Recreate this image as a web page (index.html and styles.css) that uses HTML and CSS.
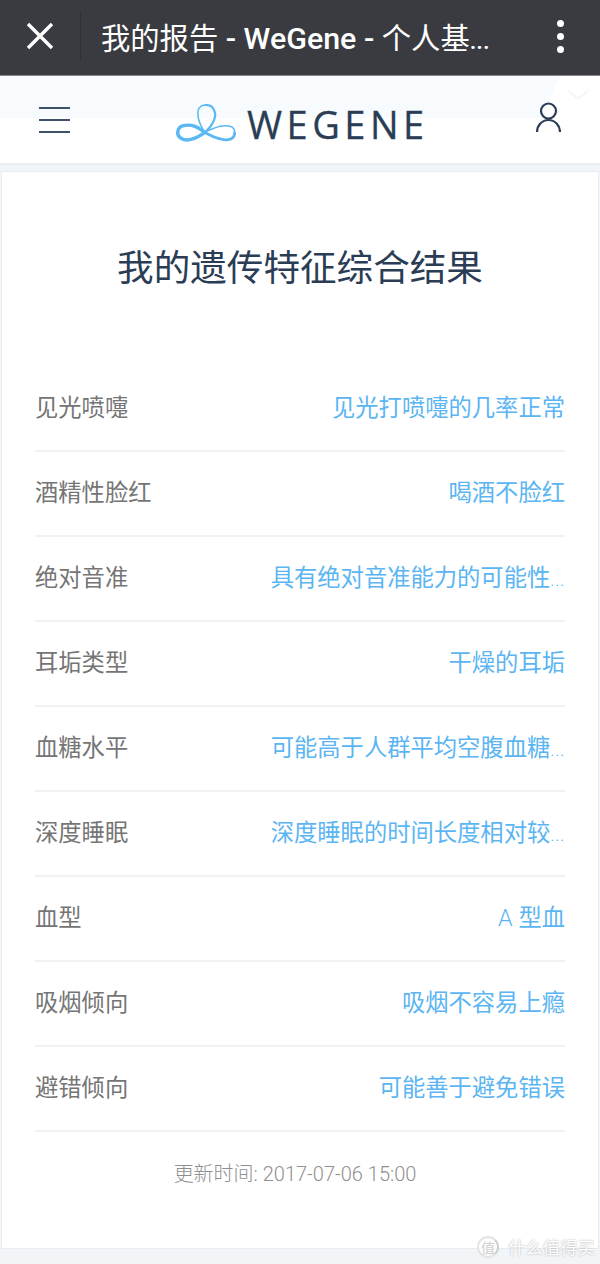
FILE: index.html
```html
<!DOCTYPE html>
<html lang="zh">
<head>
<meta charset="utf-8">
<title>我的报告 - WeGene</title>
<link rel="stylesheet" href="styles.css">
</head>
<body>
<header class="appbar">
  <button class="appbar-close" aria-label="关闭">
    <svg width="28" height="28" viewBox="0 0 28 28"><path d="M2 2 L26 26 M26 2 L2 26" stroke="#fff" stroke-width="3.4" fill="none"/></svg>
  </button>
  <div class="appbar-title">我的报告<span class="appbar-latin"> - WeGene - </span>个人基<span class="appbar-dots">...</span></div>
  <div class="appbar-more"><i></i><i></i><i></i></div>
</header>
<nav class="nav">
  <svg class="nav-chevron" width="22" height="10" viewBox="0 0 22 10"><path d="M1 1 L11 8.5 L21 1" fill="none" stroke="#f1f6fa" stroke-width="2"/></svg>
  <div class="burger"><i></i><i></i><i></i></div>
  <div class="brand">
    <svg class="brand-mark" width="60" height="40" viewBox="0 0 60 40">
      <path d="M29 28.3 C25 31 21 33.5 17.3 34.7 C13 36.2 8.5 36.3 5.7 34.7 C2.8 33 1.5 31 1.7 28.3 C2 25 4 22.5 7.3 21.7 C11 20.8 15.5 21 19 22.3 C23 23.8 26 26.5 29 28.3" fill="none" stroke="#5bb8f5" stroke-width="3.4" stroke-linecap="round"/>
      <path d="M29 28.3 C32 30 35.5 32 39 33.3 C43.5 35 48.5 36.4 52.3 35.7 C56.5 35 58.6 32.5 58.7 29" fill="none" stroke="#5bb8f5" stroke-width="2.8" stroke-linecap="round"/>
      <path d="M58.7 29 C58.8 25.5 57 23 54 22.3 C50.5 21.5 47 21.6 44 22.3 C40.5 23.2 37 24.6 31 27" fill="none" stroke="#5bb8f5" stroke-width="1.6" stroke-linecap="round"/>
      <path d="M28 27.3 C25.5 23 23 18 22.3 14 C21.6 10.5 21.5 8 22.3 5.7 C23.5 2.5 26.5 1 30 1" fill="none" stroke="#5bb8f5" stroke-width="1.5" stroke-linecap="round"/>
      <path d="M30 1 C34.5 1 38 4 39 9 C39.8 13 38 17 35.7 20.7 C34 23.5 32 25.5 30 27.3" fill="none" stroke="#5bb8f5" stroke-width="2.2" stroke-linecap="round"/>
    </svg>
    <span class="brand-name">WEGENE</span>
  </div>
  <svg class="user" width="26" height="32" viewBox="0 0 26 32"><circle cx="13.5" cy="9" r="7.5" fill="none" stroke="#2c3e55" stroke-width="2.2"/><path d="M2 30 A11.5 12 0 0 1 25 30" fill="none" stroke="#2c3e55" stroke-width="2.2"/></svg>
</nav>
<main class="card">
  <h1 class="card-title">我的遗传特征综合结果</h1>
  <ul class="list">
    <li class="row"><span class="row-label">见光喷嚏</span><span class="row-value">见光打喷嚏的几率正常</span></li>
    <li class="row"><span class="row-label">酒精性脸红</span><span class="row-value">喝酒不脸红</span></li>
    <li class="row"><span class="row-label">绝对音准</span><span class="row-value">具有绝对音准能力的可能性<span class="row-more">...</span></span></li>
    <li class="row"><span class="row-label">耳垢类型</span><span class="row-value">干燥的耳垢</span></li>
    <li class="row"><span class="row-label">血糖水平</span><span class="row-value">可能高于人群平均空腹血糖<span class="row-more">...</span></span></li>
    <li class="row"><span class="row-label">深度睡眠</span><span class="row-value">深度睡眠的时间长度相对较<span class="row-more">...</span></span></li>
    <li class="row"><span class="row-label">血型</span><span class="row-value"><span class="row-latin">A</span> 型血</span></li>
    <li class="row"><span class="row-label">吸烟倾向</span><span class="row-value">吸烟不容易上瘾</span></li>
    <li class="row"><span class="row-label">避错倾向</span><span class="row-value">可能善于避免错误</span></li>
  </ul>
  <p class="updated">更新时间: 2017-07-06 15:00</p>
</main>
<div class="watermark"><span class="watermark-mark">值</span><span>什么值得买</span></div>
</body>
</html>
```
FILE: styles.css
```css
* { box-sizing: border-box; }
html, body { margin: 0; padding: 0; }
body {
  width: 600px;
  height: 1264px;
  overflow: hidden;
  position: relative;
  background: #f2f5f8;
  font-family: Roboto, "Noto Sans CJK SC", sans-serif;
}
.appbar {
  height: 76px;
  padding-bottom: 3px;
  background: #3a3b40;
  border-bottom: 1px solid #85868a;
  display: flex;
  align-items: center;
  color: #fff;
}
.appbar-close {
  width: 81px;
  height: 48px;
  padding: 0;
  border: 0;
  background: none;
  display: flex;
  align-items: center;
  justify-content: center;
  border-right: 1px solid #2f3034;
  margin-right: 20px;
}
.appbar-title {
  flex: 1;
  font-size: 29.3px;
  font-weight: 400;
  white-space: pre;
}
.appbar-latin {
  font-size: 30.4px;
  font-weight: 500;
}
.appbar-dots {
  font-size: 24px;
  font-weight: 500;
}
.appbar-more {
  width: 80px;
  display: flex;
  flex-direction: column;
  align-items: center;
  gap: 6px;
}
.appbar-more i {
  width: 7px;
  height: 7px;
  border-radius: 50%;
  background: #fff;
}
.nav {
  height: 89px;
  background: #fff;
  border-bottom: 2px solid #e9edf1;
  display: flex;
  align-items: center;
  position: relative;
  padding: 0 38px 0 39px;
}
.nav::before {
  content: "";
  position: absolute;
  left: 0;
  top: 0;
  width: 560px;
  height: 42px;
  background: #f7fbfe;
  clip-path: polygon(0 0, 100% 0, 96.5% 100%, 0 100%);
}
.nav > * { position: relative; }
.nav .nav-chevron {
  position: absolute;
  right: 11px;
  top: 14px;
}
.burger {
  width: 31px;
  margin-top: 1px;
  display: flex;
  flex-direction: column;
  gap: 10px;
}
.burger i {
  height: 2px;
  background: #3e5169;
}
.brand {
  margin-left: 106px;
  margin-top: 8px;
  display: flex;
  align-items: center;
  gap: 11px;
}
.brand-name {
  font-family: "Open Sans", sans-serif;
  font-size: 38px;
  font-weight: 500;
  line-height: 40px;
  letter-spacing: 4.5px;
  color: #2a3d55;
  -webkit-text-stroke: .3px #2a3d55;
}
.user {
  margin-left: auto;
  margin-right: 1px;
  margin-top: -4px;
}
.card {
  margin: 6px 1px 0;
  height: 1078px;
  background: #fff;
  border: 1px solid #e9edf1;
  padding: 0 33px;
}
.card-title {
  margin: 65px 0 0;
  height: 64px;
  text-align: center;
  font-size: 36.6px;
  line-height: 64px;
  font-weight: 400;
  color: #2a3d55;
  white-space: nowrap;
}
.list {
  list-style: none;
  margin: 66px 0 0;
  padding: 0;
}
.row {
  height: 85px;
  padding-bottom: 6px;
  border-bottom: 2px solid #eef2f3;
  display: flex;
  align-items: center;
  justify-content: space-between;
  font-size: 23.3px;
}
.row-label { color: #757575; }
.row-value { color: #5bb5f2; }
.row-more {
  font-size: 18px;
  font-weight: 300;
  letter-spacing: .6px;
}
.row-latin { font-weight: 300; }
.updated {
  margin: 27px 0 0;
  padding-right: 10px;
  text-align: center;
  font-size: 20px;
  line-height: 30px;
  font-weight: 300;
  color: #8f8f8f;
}
.watermark {
  position: absolute;
  right: 5px;
  bottom: 5px;
  display: flex;
  align-items: center;
  gap: 9px;
  font-size: 17.4px;
  color: #fff;
  text-shadow: 0 0 2px #a0a0a0;
}
.watermark-mark {
  width: 22px;
  height: 22px;
  border: 2px solid #e4e4e4;
  border-right-color: #cfcfcf;
  border-radius: 50%;
  background: rgba(255, 255, 255, .7);
  display: flex;
  align-items: center;
  justify-content: center;
  font-size: 14px;
  color: #d0d0d0;
  text-shadow: none;
}
```
